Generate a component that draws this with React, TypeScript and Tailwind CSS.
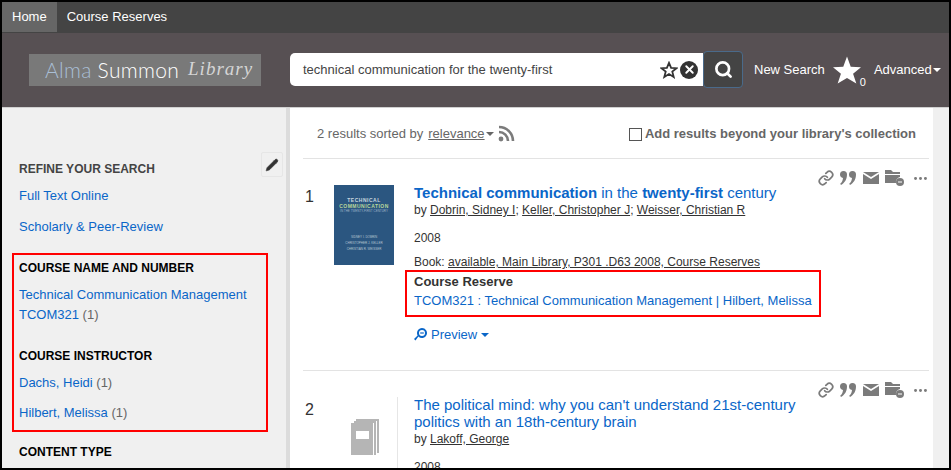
import { Link, MoreHorizontal, Pencil, Search, X } from "lucide-react"

const sans = "font-['Liberation_Sans',Arial,sans-serif]"

function ActionIcons() {
  return (
    <div className="flex items-center gap-[6px] text-[#7b7b7b]">
      <Link className="w-[16px] h-[16px]" strokeWidth={2.6} />
      <svg width="17" height="15" viewBox="0 0 17 15" fill="currentColor">
        <path d="M0 3.5a3.5 3.5 0 1 1 7 0c0 5-2.5 8.5-6 10.5l-.8-1.2c1.6-1.3 2.5-2.6 2.8-5.8A3.5 3.5 0 0 1 0 3.5z" />
        <path d="M9 3.5a3.5 3.5 0 1 1 7 0c0 5-2.5 8.5-6 10.5l-.8-1.2c1.6-1.3 2.5-2.6 2.8-5.8A3.5 3.5 0 0 1 9 3.5z" />
      </svg>
      <svg width="16" height="12" viewBox="0 0 16 12" fill="currentColor">
        <path d="M0 0h16L8 5z" />
        <path d="M0 2l8 5 8-5v10H0z" />
      </svg>
      <svg width="20" height="18" viewBox="0 0 20 18" fill="currentColor">
        <path d="M0 1h6l2 2h7v2H0zM0 6h15v2a5 5 0 0 0-4 6H0z" />
        <circle cx="15" cy="13" r="4" />
        <path d="M13 13h4" stroke="white" strokeWidth="1" />
      </svg>
      <MoreHorizontal className="w-[17px] h-[17px] ml-[1px]" strokeWidth={2.2} />
    </div>
  )
}

function Caret({ className }: { className: string }) {
  return <span className={`inline-block w-0 h-0 border-x-[4px] border-x-transparent border-t-[4px] ${className}`} />
}

export default function App() {
  return (
    <div className={`w-[951px] h-[470px] overflow-hidden border-2 border-black bg-[#f0f0f0] flex flex-col ${sans}`}>
      <nav className="h-[31px] bg-[#444444] flex text-[13px] text-white shrink-0">
        <a className="h-[30px] px-[10px] bg-[#666666] flex items-center">Home</a>
        <a className="h-[30px] px-[10px] flex items-center">Course Reserves</a>
      </nav>

      <header className="h-[75px] bg-[#575053] flex items-center shrink-0 border-b border-[#d0d0d0] pb-[1px]">
        <div className="ml-[27px] w-[232px] h-[32px] bg-[#797979] flex items-center pl-[16px] text-[21px] whitespace-nowrap font-['Lato',sans-serif] font-light">
          <span className="text-[#a9bfd6] tracking-[0.3px]">Alma</span>
          <span className="text-white ml-[6px] tracking-[0.3px]">Summon</span>
          <span className="text-[#d5d5d5] ml-[9px] italic text-[19px] font-['Liberation_Serif',serif] tracking-[1px]">Library</span>
        </div>
        <div className="ml-[29px] w-[413px] h-[33px] bg-white rounded-l-[5px] flex items-center pl-[13px] pr-[5px] text-[13px] text-[#444444]">
          <span className="flex-1">technical communication for the twenty-first</span>
          <svg width="18" height="18" viewBox="0 0 24 24" fill="none" stroke="#333333" strokeWidth="2.4">
            <polygon points="12,2.5 14.8,9.2 22,9.6 16.4,14.2 18.3,21.3 12,17.4 5.7,21.3 7.6,14.2 2,9.6 9.2,9.2" />
          </svg>
          <span className="ml-[2px] w-[18px] h-[18px] rounded-full bg-[#333333] flex items-center justify-center">
            <X className="w-[13px] h-[13px] text-white" strokeWidth={3.5} />
          </span>
        </div>
        <button className="w-[40px] h-[37px] bg-[#444444] rounded-[4px] border border-[#4a6a8a] flex items-center justify-center shrink-0">
          <Search className="w-[19px] h-[19px] text-white" strokeWidth={3.4} />
        </button>
        <span className="ml-[11px] text-[13px] text-white whitespace-nowrap">New Search</span>
        <svg className="ml-[8px] shrink-0" width="28" height="28" viewBox="0 0 30 29" fill="white">
          <polygon points="15,0 19,11 30,11.5 21.5,18.5 25,29 15,23 5,29 8.5,18.5 0,11.5 11,11" />
        </svg>
        <span className="text-[11px] text-white self-end mb-[16px] -ml-[1px]">0</span>
        <span className="ml-[8px] text-[13px] text-white">Advanced</span>
        <Caret className="border-t-white ml-[1px]" />
      </header>

      <div className="flex flex-1 min-h-0">
        <aside className="w-[288px] shrink-0 border-r-[4px] border-[#dcdcdc] pt-[49px] pl-[10px] pr-[3px] text-[13px]">
          <div className="relative h-[24px] pl-[7px] flex items-center">
            <h2 className="text-[12px] font-bold text-[#444444]">REFINE YOUR SEARCH</h2>
            <span className="absolute right-0 top-[-5px] w-[22px] h-[25px] border border-[#e6e6e6] rounded-[2px] flex items-center justify-center">
              <Pencil className="w-[14px] h-[14px] text-[#333333]" fill="currentColor" strokeWidth={1} />
            </span>
          </div>
          <a className="block pl-[7px] mt-[5px] leading-[20px] text-[#0a66c8]">Full Text Online</a>
          <a className="block pl-[7px] mt-[11px] leading-[20px] text-[#0a66c8]">Scholarly &amp; Peer-Review</a>

          <section className="mt-[16px] w-[256px] h-[179px] border-[2px] border-[#ff0000] pl-[5px] pt-[5px]">
            <h2 className="text-[12px] leading-[17px] font-bold text-black">COURSE NAME AND NUMBER</h2>
            <a className="block mt-[8px] leading-[20px] text-[#0a66c8]">Technical Communication Management</a>
            <p className="leading-[20px] text-[#666666]"><a className="text-[#0a66c8]">TCOM321</a> (1)</p>
            <h2 className="mt-[23px] text-[12px] leading-[17px] font-bold text-black">COURSE INSTRUCTOR</h2>
            <p className="mt-[8px] leading-[20px] text-[#666666]"><a className="text-[#0a66c8]">Dachs, Heidi</a> (1)</p>
            <p className="mt-[10px] leading-[20px] text-[#666666]"><a className="text-[#0a66c8]">Hilbert, Melissa</a> (1)</p>
          </section>
          <h2 className="mt-[12px] pl-[7px] text-[12px] leading-[17px] font-bold text-black">CONTENT TYPE</h2>
        </aside>

        <main className="w-[643px] shrink-0 bg-white pl-[13px] pr-[4px]">
          <div className="h-[51px] border-b border-[#e3e3e3] flex items-center pt-[2px] pl-[14px] pr-[13px] text-[13px] text-[#666666]">
            <span>2 results sorted by</span>
            <span className="ml-[5px] underline">relevance</span>
            <Caret className="border-t-[#666666] ml-[1px]" />
            <svg className="ml-[4px] -mt-[2px]" width="17" height="17" viewBox="0 0 17 17" fill="none" stroke="#7b7b7b" strokeWidth="2.6">
              <circle cx="3" cy="14" r="2.4" fill="#7b7b7b" stroke="none" />
              <path d="M1 7a9 9 0 0 1 9 9" />
              <path d="M1 2a14 14 0 0 1 14 14" />
            </svg>
            <span className="ml-auto w-[13px] h-[13px] border border-[#555555] bg-white" />
            <span className="ml-[3px] font-bold">Add results beyond your library's collection</span>
          </div>

          <article className="relative h-[212px] border-b border-[#e3e3e3] flex pt-[27px] text-[12px] text-[#333333]">
            <span className="w-[31px] pl-[2px] text-[16px] leading-[22px]">1</span>
            <div className="w-[60px] h-[80px] bg-[#2b5680] shrink-0 flex flex-col items-center text-center pt-[13px] -mt-[1px] leading-none font-['Liberation_Sans',sans-serif] overflow-hidden">
              <p className="text-[5px] font-bold text-[#c9d6df] tracking-[0.5px]">TECHNICAL</p>
              <p className="text-[5px] font-bold text-[#b9d89c] tracking-[0.5px] mt-[1px]">COMMUNICATION</p>
              <p className="text-[3px] text-[#9db4c8] mt-[1px]">IN THE TWENTY-FIRST CENTURY</p>
              <p className="text-[3px] text-[#b7c6d3] mt-[23px]">SIDNEY I. DOBRIN</p>
              <p className="text-[3px] text-[#b7c6d3] mt-[3px]">CHRISTOPHER J. KELLER</p>
              <p className="text-[3px] text-[#b7c6d3] mt-[3px]">CHRISTIAN R. WEISSER</p>
            </div>
            <div className="ml-[20px] flex-1 min-w-0 -mt-[2px]">
              <h3 className="text-[15px] leading-[17px] text-[#0a66c8]">
                <b>Technical communication</b> in the <b>twenty-first</b> century
              </h3>
              <p className="mt-[1px] leading-[16px]">
                by <u>Dobrin, Sidney I</u>; <u>Keller, Christopher J</u>; <u>Weisser, Christian R</u>
              </p>
              <p className="mt-[12px] leading-[16px]">2008</p>
              <p className="mt-[8px] leading-[16px]">
                Book: <u>available, Main Library, P301 .D63 2008, Course Reserves</u>
              </p>
              <div className="w-[416px] h-[47px] -ml-[9px] border-[2px] border-[#ff0000] pl-[7px] pt-[1px]">
                <p className="text-[13px] leading-[18px] font-bold text-[#333333]">Course Reserve</p>
                <a className="block text-[13px] leading-[19px] text-[#0a66c8] whitespace-nowrap">
                  TCOM321 : Technical Communication Management | Hilbert, Melissa
                </a>
              </div>
              <div className="mt-[8px] flex items-center text-[13px] text-[#0a66c8]">
                <svg width="13" height="14" viewBox="0 0 13 14" fill="currentColor">
                  <path d="M8 0a5 5 0 1 1-3.6 8.5L1.5 12.5 0 11l3.6-3.6A5 5 0 0 1 8 0zm0 2a3 3 0 1 0 0 6 3 3 0 0 0 0-6z" />
                  <rect x="6.2" y="4.4" width="3.6" height="1.2" />
                </svg>
                <span className="ml-[4px]">Preview</span>
                <Caret className="border-t-[#0a66c8] ml-[4px]" />
              </div>
            </div>
            <div className="absolute right-0 top-[10px]"><ActionIcons /></div>
          </article>

          <article className="relative flex pt-[27px] text-[12px] text-[#333333]">
            <span className="w-[30px] pl-[2px] text-[16px] leading-[22px] pt-[1px]">2</span>
            <div className="w-[65px] h-[84px] -mt-[1px] shrink-0 border-r border-[#e6e6e6] flex items-start justify-center pt-[22px]">
              <svg width="28" height="36" viewBox="0 0 28 36" fill="#b5b5b5">
                <path d="M5 0h23v34h-2V2H5z" />
                <path d="M3 2h22v34h-2V4H3z" />
                <path d="M0 4h22v32H0z" />
                <rect x="5" y="12" width="13" height="8" fill="white" />
              </svg>
            </div>
            <div className="ml-[16px] flex-1 min-w-0 -mt-[2px]">
              <h3 className="text-[15px] leading-[17px] text-[#0a66c8] w-[400px]">
                The political mind: why you can't understand 21st-century politics with an 18th-century brain
              </h3>
              <p className="mt-[1px] leading-[16px]">by <u>Lakoff, George</u></p>
              <p className="mt-[12px] leading-[16px]">2008</p>
            </div>
            <div className="absolute right-0 top-[10px]"><ActionIcons /></div>
          </article>
        </main>
      </div>
    </div>
  )
}
